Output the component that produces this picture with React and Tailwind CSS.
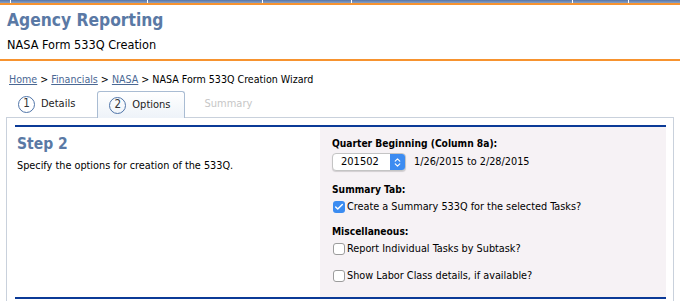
import { Check, ChevronsUpDown } from 'lucide-react';

function Step({ n, label, active }) {
  return (
    <div
      className={
        active
          ? 'relative -mb-px flex h-[27px] items-center gap-[6px] rounded-t-[3px] border border-b-0 border-[#a9bcd3] bg-gradient-to-b from-white to-[#eef3f9] pl-[11px] pr-[13px]'
          : 'flex h-[26px] items-center gap-[6px] pl-[11px] pr-[22px]'
      }
    >
      <span className="flex h-[17px] w-[17px] items-center justify-center rounded-full border border-[#4f74a8] text-[11.5px] leading-none text-[#333]">
        {n}
      </span>
      <span className="text-[11px] text-[#222]">{label}</span>
    </div>
  );
}

function Box({ checked }) {
  return checked ? (
    <span className="flex h-[12px] w-[12px] items-center justify-center rounded-[3px] bg-[#3b8cf1]">
      <Check size={10} strokeWidth={3.5} className="text-white" />
    </span>
  ) : (
    <span className="h-[12px] w-[12px] rounded-[3px] border border-[#9c9c9c] bg-white" />
  );
}

function Option({ checked, children, className }) {
  return (
    <label className={'flex h-[14px] items-center gap-[2px] pl-px ' + className}>
      <Box checked={checked} />
      <span>{children}</span>
    </label>
  );
}

export default function App() {
  return (
    <div className="h-[301px] w-[680px] overflow-hidden bg-white font-['DejaVu_Sans_Condensed','DejaVu_Sans',sans-serif]">
      {/* top nav strip */}
      <div className="flex h-[3px] bg-gradient-to-b from-[#5674a6] to-[#8aa2c6]">
        <span className="w-[10px]" />
        <span className="h-[3px] w-px bg-white" />
        <span className="w-[136px]" />
        <span className="h-[3px] w-px bg-white" />
        <span className="w-[114px]" />
        <span className="h-[3px] w-px bg-white" />
        <span className="w-[88px]" />
        <span className="h-[3px] w-px bg-white" />
        <span className="w-[220px]" />
        <span className="h-[3px] w-px bg-white" />
        <span className="w-[55px]" />
        <span className="h-[3px] w-px bg-white" />
      </div>
      <div className="h-[2px] bg-[#f7932f]" />

      <div className="h-[56px] border-b-2 border-[#f7932f] px-[7px] pt-[5px]">
        <h1 className="text-[17.3px] font-bold leading-[20px] text-[#5a79a5]">Agency Reporting</h1>
        <p className="mt-[7px] text-[12.6px] leading-[16px] text-black">NASA Form 533Q Creation</p>
      </div>

      <div className="mt-[11px] px-[9px] text-[10.6px] leading-[14px] text-black">
        <a className="text-[#4a6894] underline">Home</a> &gt;{' '}
        <a className="text-[#4a6894] underline">Financials</a> &gt;{' '}
        <a className="text-[#4a6894] underline">NASA</a> &gt; NASA Form 533Q Creation Wizard
      </div>

      <div className="mt-[5px] flex items-end pl-[7px]">
        <Step n="1" label="Details" />
        <Step n="2" label="Options" active />
        <div className="flex h-[26px] items-center pl-[20px] text-[11px] text-[#c6c6c6]">Summary</div>
      </div>

      <div className="mx-[6px] h-[200px] border-x border-t border-[#c9d1dc] pl-[8px] pr-[7px] pt-[7px]">
        <div className="flex h-[174px] border-y-2 border-[#0b3a97]">
          <div className="w-[305px] pl-[2px] pt-[7px]">
            <h2 className="text-[15.5px] font-bold leading-[20px] text-[#5a79a5]">Step 2</h2>
            <p className="mt-[5px] text-[10.8px] leading-[14px] text-black">
              Specify the options for creation of the 533Q.
            </p>
          </div>

          <div className="flex-1 bg-[#f6f2f5] pl-[12px] pt-[10px] text-[10.8px] leading-[14px] text-black">
            <div className="text-[10.2px] font-bold">Quarter Beginning (Column 8a):</div>
            <div className="mt-[2px] flex items-center gap-[8px]">
              <div className="flex h-[18px] w-[74px] items-stretch overflow-hidden rounded-[4px] border border-[#c4c4c4] bg-white shadow-[0_1px_1px_rgba(0,0,0,0.15)]">
                <span className="flex flex-1 items-center pl-[8px] text-[11px]">201502</span>
                <span className="flex w-[15px] items-center justify-center bg-[#3d8cf1]">
                  <ChevronsUpDown size={11} strokeWidth={2.5} className="text-white" />
                </span>
              </div>
              <span>1/26/2015 to 2/28/2015</span>
            </div>

            <div className="mt-[12px] text-[10.2px] font-bold">Summary Tab:</div>
            <Option checked className="mt-[3px]">Create a Summary 533Q for the selected Tasks?</Option>

            <div className="mt-[11px] text-[10.2px] font-bold">Miscellaneous:</div>
            <Option className="mt-[3px]">Report Individual Tasks by Subtask?</Option>
            <Option className="mt-[13px]">Show Labor Class details, if available?</Option>
          </div>
        </div>
      </div>
    </div>
  );
}
